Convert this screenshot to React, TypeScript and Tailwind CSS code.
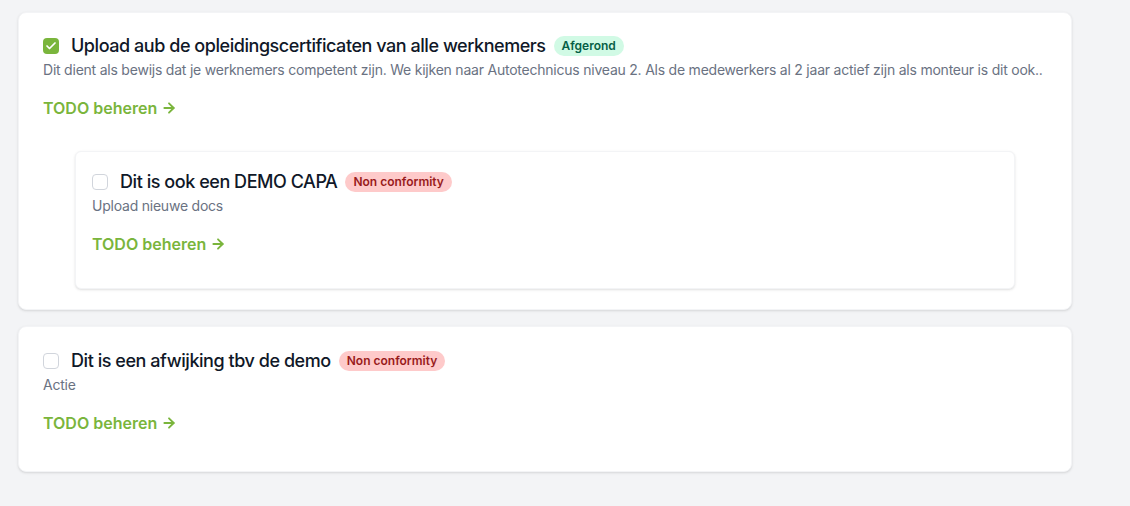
import { Check, ArrowRight } from 'lucide-react';

type Item = {
  title: string;
  description: string;
  done: boolean;
  badge: 'done' | 'nc';
};

function Badge({ kind }: { kind: 'done' | 'nc' }) {
  if (kind === 'done') {
    return (
      <span className="ml-2 rounded-full bg-[#d1fae5] px-2 py-0.5 text-xs font-semibold leading-4 text-[#065f46]">
        Afgerond
      </span>
    );
  }
  return (
    <span className="ml-2 rounded-full bg-[#fecaca] px-2 py-0.5 text-xs font-semibold leading-4 text-[#991b1b]">
      Non conformity
    </span>
  );
}

function TaskBody({ item }: { item: Item }) {
  return (
    <div>
      <div className="flex h-5 items-center">
        {item.done ? (
          <span className="flex h-4 w-4 items-center justify-center rounded bg-[#7ab53c]">
            <Check className="h-3 w-3 text-white" strokeWidth={3.5} />
          </span>
        ) : (
          <span className="h-4 w-4 rounded border border-gray-300 bg-white" />
        )}
        <span className="ml-3 text-lg leading-5 font-medium tracking-[-0.025em] text-gray-900">
          {item.title}
        </span>
        <Badge kind={item.badge} />
      </div>
      <p className="mt-1 text-sm leading-5 tracking-[-0.016em] whitespace-nowrap text-gray-500">
        {item.description}
      </p>
      <a href="#" className="mt-4 mb-3 flex h-6 items-center gap-1 text-base font-semibold text-[#7ab53c]">
        TODO beheren
        <ArrowRight className="h-4 w-4" strokeWidth={2.75} />
      </a>
    </div>
  );
}

export default function App() {
  return (
    <div
      className="min-h-[506px] bg-[#f3f4f6] pt-3 pl-[18px]"
      style={{ fontFamily: 'Inter, "Noto Sans", sans-serif' }}
    >
      <div className="flex w-[1054px] flex-col gap-4">
        <div className="rounded-lg border border-gray-100 bg-white px-6 pt-[23px] pb-5 shadow">
          <TaskBody
            item={{
              title: 'Upload aub de opleidingscertificaten van alle werknemers',
              description:
                'Dit dient als bewijs dat je werknemers competent zijn. We kijken naar Autotechnicus niveau 2. Als de medewerkers al 2 jaar actief zijn als monteur is dit ook..',
              done: true,
              badge: 'done',
            }}
          />
          <div className="mx-8 mt-[31px] rounded-md border border-gray-100 bg-white px-4 pt-5 pb-5 shadow">
            <TaskBody
              item={{
                title: 'Dit is ook een DEMO CAPA',
                description: 'Upload nieuwe docs',
                done: false,
                badge: 'nc',
              }}
            />
          </div>
        </div>
        <div className="rounded-lg border border-gray-100 bg-white p-6 shadow">
          <TaskBody
            item={{
              title: 'Dit is een afwijking tbv de demo',
              description: 'Actie',
              done: false,
              badge: 'nc',
            }}
          />
        </div>
      </div>
    </div>
  );
}
